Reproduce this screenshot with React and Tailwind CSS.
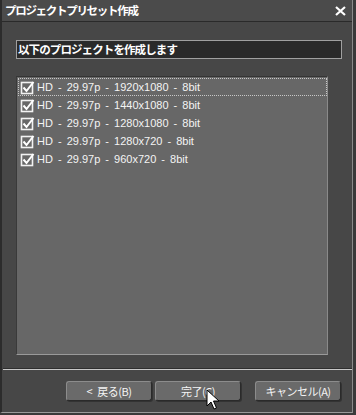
import React from "react";

const rows = [
  "HD - 29.97p - 1920x1080 - 8bit",
  "HD - 29.97p - 1440x1080 - 8bit",
  "HD - 29.97p - 1280x1080 - 8bit",
  "HD - 29.97p - 1280x720 - 8bit",
  "HD - 29.97p - 960x720 - 8bit",
];

function Check() {
  return (
    <svg width="15" height="15" viewBox="0 0 15 15" className="shrink-0">
      <rect x="1.5" y="2.5" width="11" height="11" fill="none" stroke="#f2f2f2" strokeWidth="1.6" />
      <path d="M3.5 7.5 L6.5 11 L13.5 2" fill="none" stroke="#ffffff" strokeWidth="2" />
    </svg>
  );
}

function Btn({ children, className = "" }) {
  return (
    <div
      className={
        "h-[20px] w-[86px] rounded-[3px] bg-[#6a6a6a] border border-t-[#8c8c8c] border-l-[#8c8c8c] border-b-[#2a2a2a] border-r-[#2a2a2a] shadow-[1px_1px_0_#333] flex items-center justify-center text-[11px] tracking-[-0.5px] text-[#f4f4f4] font-['Noto_Sans_CJK_JP',sans-serif] " +
        className
      }
    >
      {children}
    </div>
  );
}

export default function App() {
  return (
    <div className="w-[356px] h-[415px] bg-[#3a3a3a] relative overflow-hidden">
      <div className="w-[353px] h-[413px] bg-[#474747] border-l-2 border-l-[#2c2c2c] border-r border-r-[#8a8a8a] border-b border-b-[#9a9a9a] flex flex-col">
        {/* title bar */}
        <div className="h-[22px] bg-[#4b4b4b] border-b border-b-[#2a2a2a] flex items-center justify-between pl-[3px] pr-[6px] shrink-0">
          <span className="text-[11.5px] font-bold text-white tracking-[-1.3px] leading-none font-['Noto_Sans_CJK_JP',sans-serif]">
            プロジェクトプリセット作成
          </span>
          <svg width="11" height="10" viewBox="0 0 11 10">
            <path d="M1 1 L10 9 M10 1 L1 9" stroke="#ffffff" strokeWidth="2.2" />
          </svg>
        </div>

        <div className="pl-[14px] pt-[18px] flex flex-col">
          {/* header box */}
          <div className="w-[326px] h-[19px] bg-[#2a2a2a] border border-[#a0a0a0] flex items-center pl-[1px]">
            <span className="text-[11.5px] font-bold text-white leading-none tracking-[-0.9px] font-['Noto_Sans_CJK_JP',sans-serif]">
              以下のプロジェクトを作成します
            </span>
          </div>

          {/* list */}
          <div className="mt-[17px] w-[312px] h-[279px] bg-[#676767] border-t border-l border-t-[#353535] border-l-[#3a3a3a] border-b border-r border-b-[#9a9a9a] border-r-[#8a8a8a] pt-[1px] pl-[1px]">
            {rows.map((r, i) => (
              <div
                key={r}
                className={
                  "h-[18px] w-[309px] flex items-center gap-[2px] pl-[1px] " +
                  (i === 0 ? "border border-dotted border-[#c8c8c8]" : "border border-transparent")
                }
              >
                <Check />
                <span className="text-[11px] text-[#f4f4f4] leading-none [word-spacing:2px] font-['Liberation_Sans',sans-serif]">
                  {r}
                </span>
              </div>
            ))}
          </div>
        </div>

        {/* separator */}
        <div className="mt-[13px] ml-[1px] h-[2px] border-t border-t-[#2e2e2e] border-b border-b-[#c8c8c8]" />

        {/* buttons */}
        <div className="mt-[11px] pl-[64px] flex">
          <Btn>
            <span className="mr-[5px]">&lt;</span>
            <span>戻る(B)</span>
          </Btn>
          <Btn className="ml-[3px]">完了(C)</Btn>
          <Btn className="ml-[14px]">キャンセル(A)</Btn>
        </div>
      </div>

      {/* mouse cursor */}
      <svg className="absolute left-[206px] top-[389px]" width="14" height="22" viewBox="0 0 14 22">
        <path d="M1 1 L1 17 L5 13 L8 20 L10.5 19 L7.5 12 L13 12 Z" fill="#ffffff" stroke="#000000" strokeWidth="1" />
      </svg>
    </div>
  );
}
